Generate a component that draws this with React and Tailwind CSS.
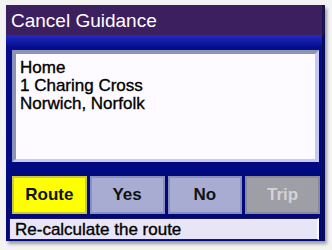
import React from 'react';

const buttons = [
  { label: 'Route', cls: 'bg-[#ffff00] border-[#c8c83c] text-[#111]' },
  { label: 'Yes', cls: 'bg-[#a9acd2] border-[#8a90bc] text-[#111]' },
  { label: 'No', cls: 'bg-[#a9acd2] border-[#8a90bc] text-[#111]' },
  { label: 'Trip', cls: 'bg-[#9e9ea6] border-[#8a8a96] text-[#d2d2d8]' },
];

const App = () => {
  return (
    <div className="w-[332px] h-[250px] bg-[#f3f3f3] pt-[5px] pl-[6px] font-['Liberation_Sans',Arial,sans-serif]">
      <div className="w-[319px] flex flex-col shadow-[2px_3px_3px_rgba(0,0,0,0.35)]">
        {/* title */}
        <div className="h-[30px] bg-[#3b1f5f] border-r-[3px] border-[#1c1450] flex items-center pl-[5px]">
          <span className="text-white text-[19px] leading-none">Cancel Guidance</span>
        </div>

        {/* body */}
        <div className="bg-linear-to-b from-[#2228c4] via-[#030d8c] via-6% to-[#00087a] pl-[6px] pr-[3px] pt-[15px] pb-[1px] border-r-[3px] border-[#0a0a5c]">
          <div className="h-[112px] bg-[#fdfbff] border-t-4 border-l-4 border-[#8e92b6] border-r-4 border-b-[3px] border-r-[#c6caf0] border-b-[#c6caf0] pl-[4px] pt-[5px] text-black text-[17px] leading-[18px] [-webkit-text-stroke:0.35px_black]">
            <div>Home</div>
            <div>1 Charing Cross</div>
            <div>Norwich, Norfolk</div>
          </div>

          <div className="grid grid-cols-4 gap-[3px] mt-[14px] h-[38px] -mr-[1px]">
            {buttons.map((b) => (
              <div
                key={b.label}
                className={`border-2 flex items-center justify-center font-bold text-[17px] ${b.cls}`}
              >
                {b.label}
              </div>
            ))}
          </div>

          <div className="mt-[4px] -ml-[3px] h-[22px] bg-[#e8e6f6] border border-[#1a1a5a] border-r-2 border-r-[#f6f6ff] flex items-center pl-[5px] text-black text-[17px] leading-none [-webkit-text-stroke:0.35px_black]">
            Re-calculate the route
          </div>
        </div>
      </div>
    </div>
  );
};

export default App;
